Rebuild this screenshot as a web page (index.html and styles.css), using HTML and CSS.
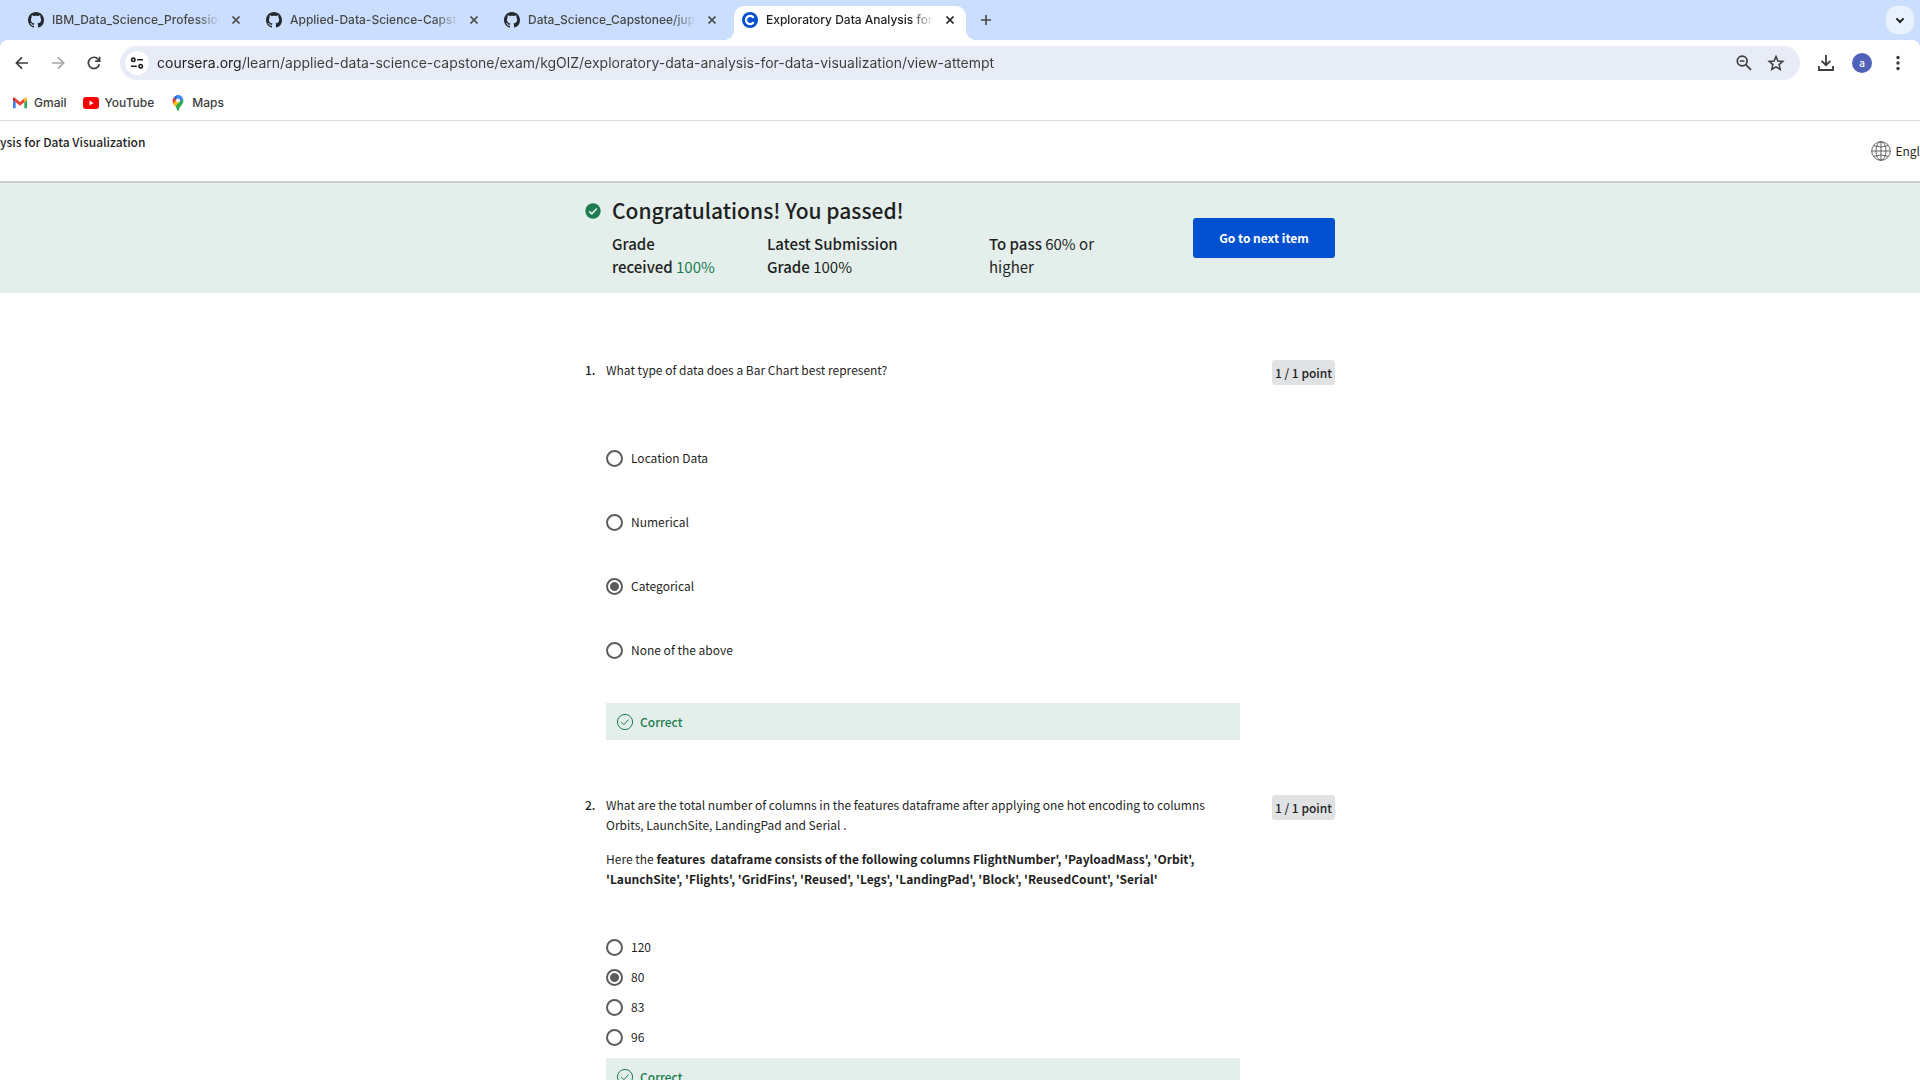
FILE: index.html
```html
<!DOCTYPE html>
<html lang="en">
<head>
<meta charset="utf-8">
<title>Exploratory Data Analysis for Data Visualization</title>
<link rel="stylesheet" href="styles.css">
</head>
<body>
<svg class="sprite" aria-hidden="true">
  <symbol id="github" viewBox="0 0 16 16"><path d="M8 0C3.58 0 0 3.58 0 8c0 3.54 2.29 6.53 5.47 7.59.4.07.55-.17.55-.38 0-.19-.01-.82-.01-1.49-2.01.37-2.53-.49-2.69-.94-.09-.23-.48-.94-.82-1.13-.28-.15-.68-.52-.01-.53.63-.01 1.08.58 1.23.82.72 1.21 1.87.87 2.33.66.07-.52.28-.87.51-1.07-1.78-.2-3.64-.89-3.64-3.95 0-.87.31-1.59.82-2.15-.08-.2-.36-1.02.08-2.12 0 0 .67-.21 2.2.82.64-.18 1.32-.27 2-.27s1.36.09 2 .27c1.53-1.04 2.2-.82 2.2-.82.44 1.1.16 1.92.08 2.12.51.56.82 1.27.82 2.15 0 3.07-1.87 3.75-3.65 3.95.29.25.54.73.54 1.48 0 1.07-.01 1.93-.01 2.2 0 .21.15.46.55.38A8.01 8.01 0 0 0 16 8c0-4.42-3.58-8-8-8z"/></symbol>
  <symbol id="close" viewBox="0 0 16 16"><path d="M4.5 4.5l7 7M11.5 4.5l-7 7" fill="none" stroke="currentColor" stroke-width="1.7"/></symbol>
  <symbol id="correct" viewBox="0 0 18 18"><g fill="none" stroke="currentColor"><circle cx="9" cy="9" r="7.6"/><path d="M5.4 9.2l2.5 2.5 4.6-5.2"/></g></symbol>
</svg>

<header class="browser">
  <nav class="tabs" aria-label="Tabs">
    <div class="tab">
      <svg class="favicon"><use href="#github"/></svg>
      <span class="tab-title">IBM_Data_Science_Professional</span>
      <button class="tab-close" aria-label="Close tab"><svg><use href="#close"/></svg></button>
    </div>
    <div class="tab">
      <svg class="favicon"><use href="#github"/></svg>
      <span class="tab-title">Applied-Data-Science-Capstone</span>
      <button class="tab-close" aria-label="Close tab"><svg><use href="#close"/></svg></button>
    </div>
    <div class="tab">
      <svg class="favicon"><use href="#github"/></svg>
      <span class="tab-title">Data_Science_Capstonee/jupyter</span>
      <button class="tab-close" aria-label="Close tab"><svg><use href="#close"/></svg></button>
    </div>
    <div class="tab tab-active">
      <svg class="favicon" viewBox="0 0 16 16"><circle cx="8" cy="8" r="8" fill="#0050d0"/><path d="M11.6 5.9A4.1 4.1 0 1 0 11.6 10.1" fill="none" stroke="#fff" stroke-width="2.3"/></svg>
      <span class="tab-title">Exploratory Data Analysis for Data</span>
      <button class="tab-close" aria-label="Close tab"><svg><use href="#close"/></svg></button>
    </div>
    <button class="new-tab" aria-label="New tab"><svg viewBox="0 0 16 16"><path d="M8 3v10M3 8h10" stroke="currentColor" stroke-width="1.6"/></svg></button>
    <button class="tab-search" aria-label="Search tabs"><svg viewBox="0 0 16 16"><path d="M4.4 6.4L8 10l3.600-3.600" fill="none" stroke="currentColor" stroke-width="2"/></svg></button>
  </nav>

  <div class="toolbar">
    <div class="nav-buttons">
      <button aria-label="Back"><svg viewBox="0 0 20 20"><path d="M16 10H4.600M10 4.400L4.400 10l5.600 5.600" fill="none" stroke="currentColor" stroke-width="1.700"/></svg></button>
      <button class="muted" aria-label="Forward" disabled><svg viewBox="0 0 20 20"><path d="M4 10h11.400M10 4.400l5.600 5.600-5.600 5.600" fill="none" stroke="currentColor" stroke-width="1.700"/></svg></button>
      <button aria-label="Reload"><svg viewBox="0 0 20 20"><path d="M15.400 11.200A5.600 5.600 0 1 1 14.200 6.200L15.400 7.600M15.600 3.800v4.400h-4.400" fill="none" stroke="currentColor" stroke-width="1.700"/></svg></button>
    </div>
    <div class="omnibox">
      <button class="site-info" aria-label="View site information"><svg viewBox="0 0 16 16"><g fill="none" stroke="currentColor" stroke-width="1.600"><circle cx="4.300" cy="4.800" r="1.700"/><path d="M8.200 4.800h5.800M2 11.200h5.800"/><circle cx="11.700" cy="11.200" r="1.700"/></g></svg></button>
      <input class="address" type="text" aria-label="Address" value="coursera.org/learn/applied-data-science-capstone/exam/kgOlZ/exploratory-data-analysis-for-data-visualization/view-attempt">
      <button aria-label="Zoom"><svg viewBox="0 0 20 20"><g fill="none" stroke="currentColor" stroke-width="1.700"><circle cx="8.200" cy="8" r="4.900"/><path d="M11.800 11.600l5.200 5.200M5.900 8h4.600"/></g></svg></button>
      <button aria-label="Bookmark this page"><svg viewBox="0 0 20 20"><path d="M10 3.500l1.900 4.500 4.900.4-3.700 3.200 1.100 4.800-4.200-2.500-4.200 2.500 1.100-4.800-3.700-3.200 4.900-.4z" fill="none" stroke="currentColor" stroke-width="1.500"/></svg></button>
    </div>
    <div class="browser-actions">
      <button aria-label="Downloads"><svg viewBox="0 0 20 20"><path d="M10 2v10M5.600 7.800L10 12.200l4.400-4.400M3 13v4h14v-4" fill="none" stroke="currentColor" stroke-width="1.800"/></svg></button>
      <button class="avatar" aria-label="Profile">a</button>
      <button aria-label="Menu"><svg viewBox="0 0 20 20"><circle cx="10" cy="4.500" r="1.700"/><circle cx="10" cy="10" r="1.700"/><circle cx="10" cy="15.500" r="1.700"/></svg></button>
    </div>
  </div>

  <nav class="bookmarks" aria-label="Bookmarks">
    <a href="#"><svg viewBox="0 0 16 16"><path d="M1 13.300h2.700V7L1 4.500z" fill="#4285f4"/><path d="M12.300 13.300H15V4.500L12.300 7z" fill="#34a853"/><path d="M12.300 4V7.300L15 5.200V4c0-1.500-1.400-1.900-2.200-1.200z" fill="#fbbc04"/><path d="M3.700 7.300V3.600L8 6.900l4.300-3.300v3.700L8 10.700z" fill="#ea4335"/><path d="M1 4v1.200l2.700 2.100V3.600l-.8-.7C2.200 2.300 1 2.600 1 4z" fill="#c5221f"/></svg>Gmail</a>
    <a href="#"><svg viewBox="0 0 16 16"><rect y="2" width="16" height="12" rx="3" fill="#f00"/><path d="M6.500 5.600v4.800L10.600 8z" fill="#fff"/></svg>YouTube</a>
    <a href="#"><svg viewBox="0 0 16 16"><path d="M4 9.600C6 12 6.500 13 7.100 15q.3.900.9.900.6 0 .9-.9c.6-2.200 1.500-3.500 3-5.200C13.200 8.200 13.600 6.900 13.200 4L8 5z" fill="#34a853"/><path d="M3.300 8.500L4.500 10.300 9.900 4 3.800 2.200C2.300 4.200 2.200 6.200 3.300 8.500z" fill="#ea4335"/><path d="M4 9.600l1.500 1.900 4.400-5.200L6.200 4.900 3.200 8.400z" fill="#fbbc04"/><path d="M3.800 2.300C5.300.3 7.500-.2 9.700.4L5.900 4.900z" fill="#1a73e8"/><path d="M6.200.4c3-1.200 5.900.7 6.900 3.200L9.700 7.500 7 3.500z" fill="#4285f4"/><circle cx="8" cy="5.400" r="2" fill="#fff"/></svg>Maps</a>
  </nav>
</header>

<div class="page">
  <div class="course-bar">
    <span class="course-title">ysis for Data Visualization</span>
    <button class="language"><svg viewBox="0 0 20 20"><g fill="none" stroke="currentColor" stroke-width=".9"><circle cx="10" cy="10" r="9.300"/><ellipse cx="10" cy="10" rx="5" ry="9.300"/><path d="M10 .7v18.600M.7 10h18.600M2.600 4.600q7.400 3 14.800 0M2.600 15.400q7.400-3 14.800 0"/></g></svg>Engl</button>
  </div>

  <section class="result">
    <div class="column result-row">
      <svg class="passed" viewBox="0 0 16 16"><circle cx="8" cy="8" r="7.700" fill="#1d7c50"/><path d="M4.200 8.300l2.600 2.500 5-5.300" fill="none" stroke="#e4efeb" stroke-width="1.700"/></svg>
      <div class="summary">
        <h1>Congratulations! You passed!</h1>
        <div class="grades">
          <p><b>Grade<br>received</b> <span class="green">100%</span></p>
          <p><b>Latest Submission<br>Grade</b> 100%</p>
          <p><b>To pass</b> 60% or<br>higher</p>
        </div>
      </div>
      <button class="next">Go to next item</button>
    </div>
  </section>

  <main class="column questions">
    <section class="question">
      <span class="number">1.</span>
      <div class="body">
        <div class="prompt"><p>What type of data does a Bar Chart best represent?</p></div>
        <div class="options options-wide" role="radiogroup" aria-label="Question 1">
          <label><input type="radio" name="q1">Location Data</label>
          <label><input type="radio" name="q1">Numerical</label>
          <label><input type="radio" name="q1" checked>Categorical</label>
          <label><input type="radio" name="q1">None of the above</label>
        </div>
        <div class="feedback"><svg><use href="#correct"/></svg>Correct</div>
      </div>
      <span class="points">1 / 1 point</span>
    </section>

    <section class="question">
      <span class="number">2.</span>
      <div class="body">
        <div class="prompt">
          <p>What are the total number of columns in the features dataframe after applying one hot encoding to columns Orbits, LaunchSite, LandingPad and Serial .</p>
          <p>Here the <strong>features&nbsp; dataframe consists of the following columns FlightNumber', 'PayloadMass', 'Orbit', 'LaunchSite', 'Flights', 'GridFins', 'Reused', 'Legs', 'LandingPad', 'Block', 'ReusedCount', 'Serial'</strong></p>
        </div>
        <div class="options" role="radiogroup" aria-label="Question 2">
          <label><input type="radio" name="q2">120</label>
          <label><input type="radio" name="q2" checked>80</label>
          <label><input type="radio" name="q2">83</label>
          <label><input type="radio" name="q2">96</label>
        </div>
        <div class="feedback"><svg><use href="#correct"/></svg>Correct</div>
      </div>
      <span class="points">1 / 1 point</span>
    </section>
  </main>
</div>
</body>
</html>
```
FILE: styles.css
```css
* { box-sizing: border-box; }

body {
  margin: 0;
  height: 100vh;
  display: flex;
  flex-direction: column;
  overflow: hidden;
  background: #fff;
  color: #1f1f1f;
  font: 12px/20px "Noto Sans CJK SC", "Source Sans Pro", sans-serif;
}

p, h1 { margin: 0; }
svg { display: block; flex: none; }
.sprite { display: none; }

button {
  display: flex;
  align-items: center;
  justify-content: center;
  padding: 0;
  border: 0;
  background: none;
  color: inherit;
  font: inherit;
}

/* Browser frame */
.browser {
  flex: none;
  background: #cbdefd;
  border-bottom: 1px solid #dcdcdc;
  font: 500 12px/16px Inter, sans-serif;
}

.tabs {
  display: flex;
  gap: 6px;
  height: 40px;
  padding: 6px 6px 0 20px;
}

.tab {
  position: relative;
  display: flex;
  align-items: center;
  width: 232px;
  padding: 0 4px 6px 8px;
  color: #474747;
}

.tab-active {
  background: #fff;
  border-radius: 10px 10px 0 0;
  color: #1f1f1f;
}

.tab-active::before,
.tab-active::after {
  content: "";
  position: absolute;
  bottom: 0;
  width: 10px;
  height: 10px;
}

.tab-active::before {
  right: 100%;
  background: radial-gradient(circle at 0 0, transparent 10px, #fff 10px);
}

.tab-active::after {
  left: 100%;
  background: radial-gradient(circle at 100% 0, transparent 10px, #fff 10px);
}

.favicon { width: 16px; height: 16px; fill: #24292f; }

.tab-title {
  flex: 1;
  min-width: 0;
  margin: 0 4px 0 8px;
  overflow: hidden;
  white-space: nowrap;
  -webkit-mask-image: linear-gradient(to left, transparent, #000 24px);
  mask-image: linear-gradient(to left, transparent, #000 24px);
}

.tab-close { width: 24px; height: 24px; }
.tab-close svg { width: 16px; height: 16px; }

.new-tab { width: 28px; height: 28px; color: #474747; }
.new-tab svg { width: 16px; height: 16px; }

.tab-search {
  width: 28px;
  height: 28px;
  margin-left: auto;
  border-radius: 10px;
  background: #e9f0fe;
}
.tab-search svg { width: 16px; height: 16px; }

.toolbar {
  display: flex;
  align-items: center;
  height: 46px;
  padding: 0 12px;
  background: #fff;
  border-radius: 8px 8px 0 0;
  color: #3c3c3c;
}

.toolbar svg { width: 20px; height: 20px; fill: currentColor; }
.nav-buttons, .browser-actions { display: flex; align-items: center; gap: 16px; }
.nav-buttons { margin-right: 16px; }
.browser-actions { margin-left: 16px; }
.muted { color: #a6a6a6; }

.omnibox {
  flex: 1;
  display: flex;
  align-items: center;
  gap: 12px;
  height: 34px;
  padding: 0 14px 0 5px;
  border-radius: 17px;
  background: #e8ecf6;
}

.omnibox .site-info {
  width: 24px;
  height: 24px;
  margin-right: -4px;
  border-radius: 50%;
  background: #fff;
  color: #1f1f1f;
}
.omnibox .site-info svg { width: 16px; height: 16px; }

.address {
  flex: 1;
  min-width: 0;
  padding: 0;
  border: 0;
  outline: 0;
  background: linear-gradient(to right, #1f1f1f 84px, #3c3c3c 84px);
  -webkit-background-clip: text;
  background-clip: text;
  color: transparent;
  font: 400 14px/24px Inter, sans-serif;
}

.avatar {
  width: 20px;
  height: 20px;
  border-radius: 50%;
  background: #4f61b8;
  color: #fff;
  font-size: 10px;
}

.bookmarks {
  display: flex;
  gap: 16px;
  height: 34px;
  padding: 0 12px;
  background: #fff;
}

.bookmarks a {
  display: flex;
  align-items: center;
  gap: 6px;
  color: #3c3c3c;
  text-decoration: none;
}
.bookmarks svg { width: 16px; height: 16px; }

/* Course page */
.page { flex: 1; min-height: 0; overflow: hidden; }

.course-bar {
  display: flex;
  justify-content: space-between;
  height: 62px;
  border-bottom: 2px solid #cbcecd;
}

.course-title { padding-top: 11px; font-weight: 500; }
.language { gap: 4px; height: 60px; }
.language svg { width: 20px; height: 20px; color: #555; }

.column { width: 750px; max-width: 100%; margin: 0 auto; }
.result { background: #e4efeb; }

.result-row {
  display: flex;
  align-items: center;
  padding: 12px 0 15px;
}

.passed { width: 16px; height: 16px; margin: 8px 11px 0 0; align-self: flex-start; }
.summary { flex: 1; }

h1 { font-size: 21px; line-height: 30px; font-weight: 500; }

.grades {
  display: grid;
  grid-template-columns: 155px 222px auto;
  padding-top: 7px;
  font-size: 15px;
  line-height: 23px;
}

.grades b { font-weight: 500; }
.green { color: #1d7c50; }

.next {
  width: 142px;
  height: 40px;
  margin-top: 3px;
  border-radius: 3px;
  background: #0050d0;
  color: #fff;
  font-weight: 700;
}

.questions { padding-top: 67px; }

.question {
  display: flex;
  align-items: flex-start;
  padding-bottom: 55px;
}

.number { width: 21px; font-weight: 500; }
.body { flex: 1; margin-right: 32px; }
.prompt { display: grid; gap: 14px; }

.options { display: grid; grid-auto-rows: 30px; padding: 43px 0 6px; }
.options-wide { grid-auto-rows: 64px; padding: 46px 0 21px; }
.options label { display: flex; align-items: center; gap: 8px; }

.options input {
  appearance: none;
  width: 17px;
  height: 17px;
  margin: 0;
  border: 2px solid #5c5c5c;
  border-radius: 50%;
}

.options input:checked {
  background: radial-gradient(circle, #5c5c5c 4px, transparent 5px);
}

.feedback {
  display: flex;
  align-items: center;
  gap: 6px;
  height: 37px;
  padding: 0 10px;
  background: #e4efeb;
  color: #1d7c50;
  font-weight: 500;
}
.feedback svg { width: 18px; height: 18px; }

.points {
  width: 63px;
  border-radius: 3px;
  background: #e1e2e4;
  line-height: 25px;
  font-weight: 500;
  text-align: center;
}
```
